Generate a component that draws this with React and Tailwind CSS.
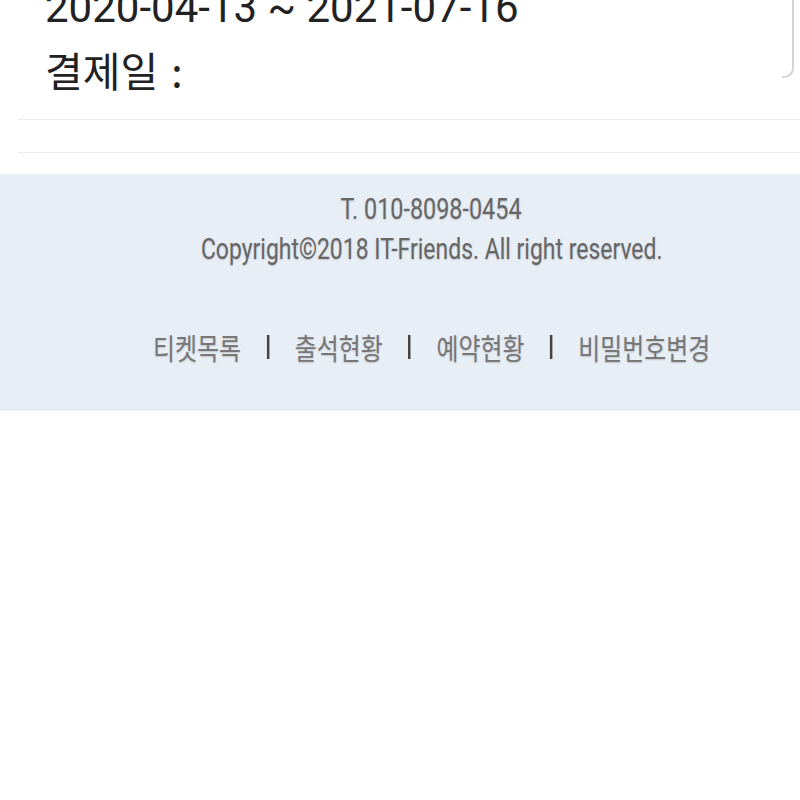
export default function App() {
  const links = ["티켓목록", "출석현황", "예약현황", "비밀번호변경"];

  return (
    <div className="relative w-[800px] h-[800px] overflow-hidden bg-white font-['Roboto','Noto_Sans_CJK_KR',sans-serif]">
      {/* ticket card (bottom part) */}
      <div className="absolute right-[6px] top-[-10px] h-[88px] w-[12px] border-r-2 border-b-2 border-[#d4d4d4] rounded-br-[10px]" />

      <div className="pl-[45px] mt-[-13px]">
        <div className="h-[41px] leading-[41px] text-[42px] text-[#222] whitespace-nowrap">
          2020-04-13 ~ 2021-07-16
        </div>
        <div className="mt-[19px] h-[44px] leading-[44px] text-[41px] text-[#222] font-['Noto_Sans_CJK_KR',sans-serif] whitespace-nowrap">
          결제일 <span className="ml-[4px]">:</span>
        </div>
      </div>

      <div className="ml-[18px] mt-[28px] border-t border-[#ececec]" />
      <div className="ml-[18px] mt-[32px] border-t border-[#ececec]" />

      {/* footer */}
      <footer className="mt-[21px] h-[237px] bg-[#e8eef5] pt-[19px] pl-[63px] text-center text-[#666] [text-shadow:0_1px_2px_rgba(0,0,0,0.18)]">
        <div className="h-[32px] leading-[32px] text-[30px]">
          <span className="inline-block scale-x-[0.78] whitespace-nowrap">T. 010-8098-0454</span>
        </div>
        <div className="mt-[8px] h-[32px] leading-[32px] text-[30px]">
          <span className="inline-block scale-x-[0.765] whitespace-nowrap">
            Copyright©2018 IT-Friends. All right reserved.
          </span>
        </div>
        <div className="mt-[66px] -ml-[63px] flex justify-center">
          <nav className="ml-[64px] flex w-fit items-center scale-x-[0.825] font-['Noto_Sans_CJK_KR',sans-serif] text-[#777]">
            {links.map((l, i) => (
              <div key={l} className="flex items-center">
                {i > 0 && <span className="mx-[31px] inline-block h-[24px] w-[3px] bg-[#444]" />}
                <span className="inline-block text-[29px] leading-[32px] whitespace-nowrap">
                  {l}
                </span>
              </div>
            ))}
          </nav>
        </div>
      </footer>
    </div>
  );
}
